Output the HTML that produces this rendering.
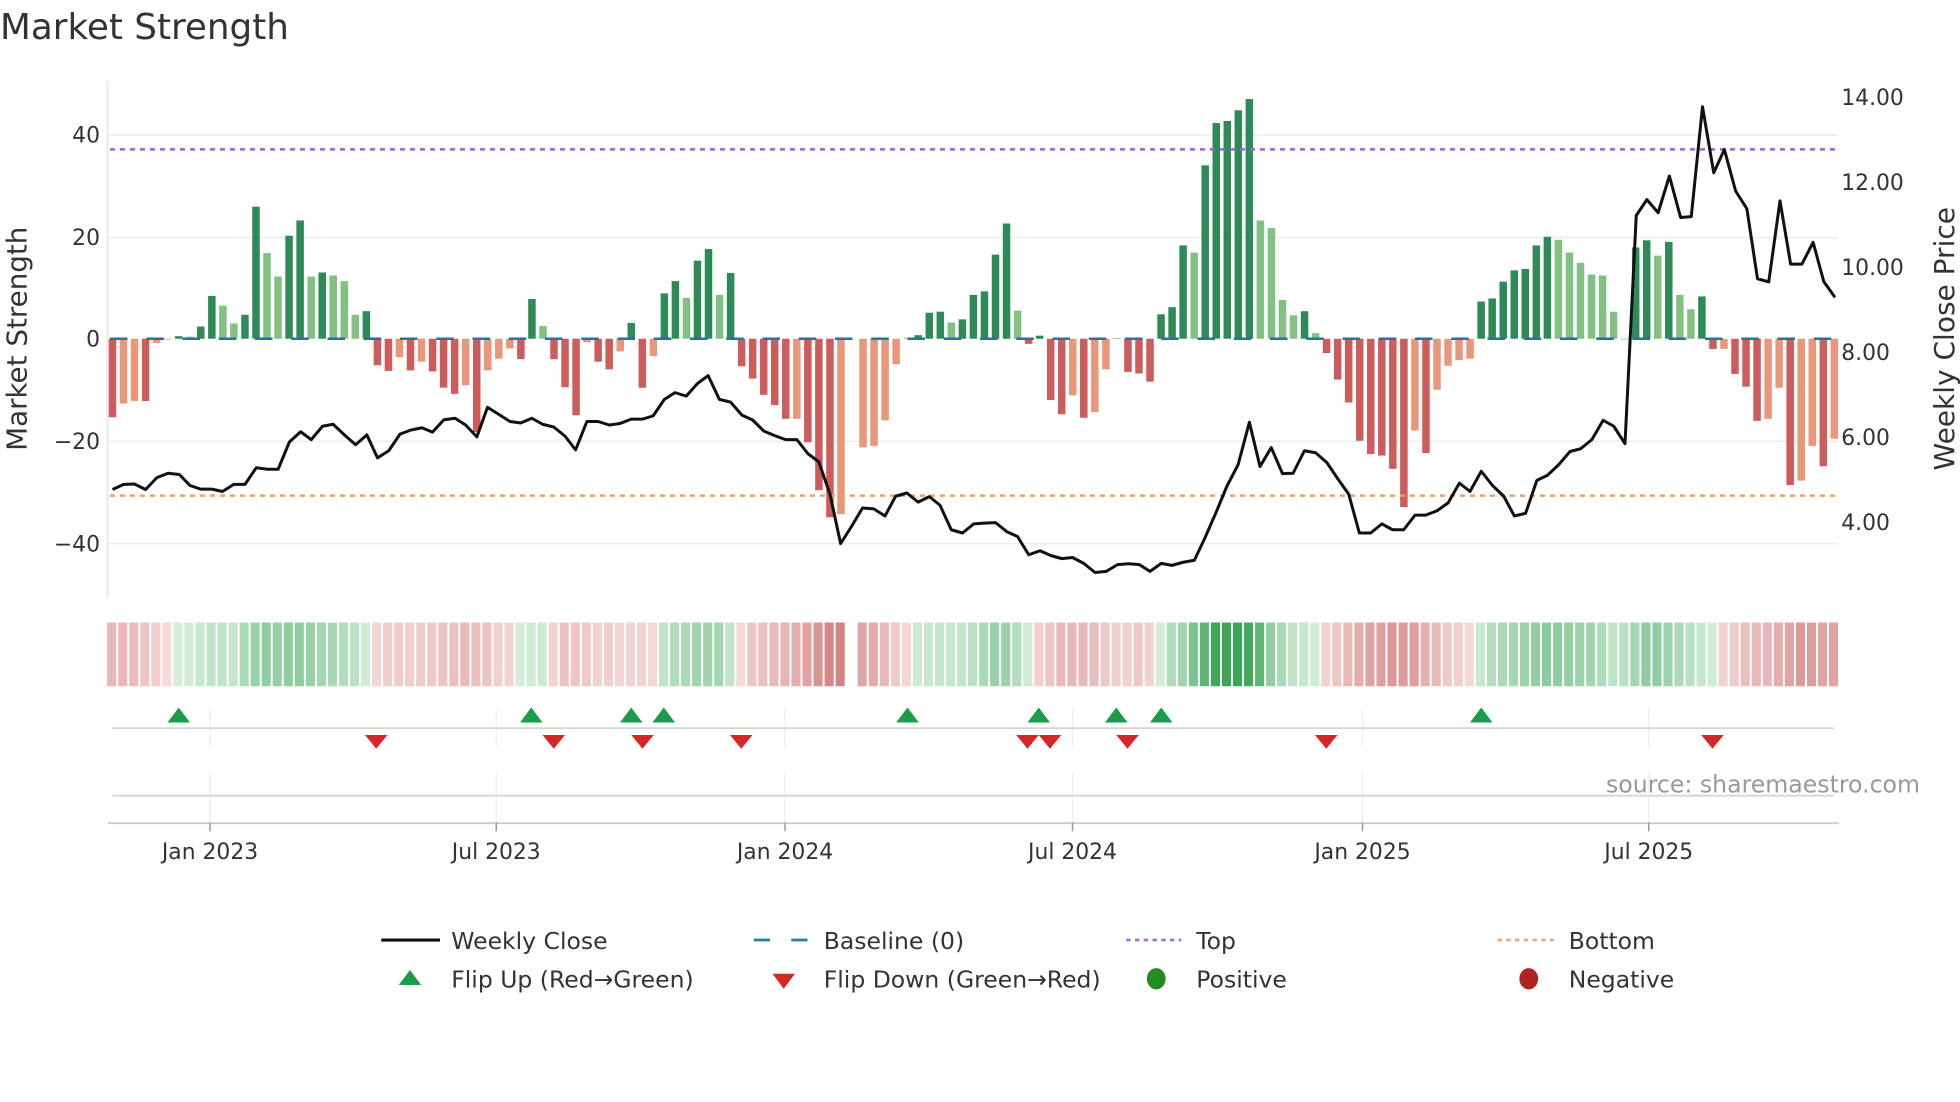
<!DOCTYPE html>
<html><head><meta charset="utf-8">
<style>
html,body{margin:0;padding:0;background:#fff;}
svg{display:block;font-family:"DejaVu Sans","Liberation Sans",sans-serif;}
</style></head>
<body>
<svg id="c" width="1960" height="1102" viewBox="0 0 1568 881.6" xmlns="http://www.w3.org/2000/svg">
<rect width="1568" height="882" fill="#fff"/>
<text x="0" y="31" font-size="28.6" fill="#333">Market Strength</text>
<!-- grid -->
<g stroke="#ececec" stroke-width="1.2">
<line x1="86" y1="108" x2="1470" y2="108"/>
<line x1="86" y1="190" x2="1470" y2="190"/>
<line x1="86" y1="353" x2="1470" y2="353"/>
<line x1="86" y1="435" x2="1470" y2="435"/>
</g>
<line x1="86" y1="65" x2="86" y2="478" stroke="#e8e8e8" stroke-width="1.5"/>
<g font-size="17.5" fill="#333" text-anchor="end">
<text x="80" y="114">40</text>
<text x="80" y="196">20</text>
<text x="80" y="277">0</text>
<text x="80" y="359">−20</text>
<text x="80" y="441">−40</text>
</g>
<g font-size="17.5" fill="#333">
<text x="1473" y="84">14.00</text>
<text x="1473" y="152">12.00</text>
<text x="1473" y="220">10.00</text>
<text x="1473" y="288">8.00</text>
<text x="1473" y="356">6.00</text>
<text x="1473" y="424">4.00</text>
</g>
<text transform="translate(21,271) rotate(-90)" font-size="22.2" fill="#333" text-anchor="middle">Market Strength</text>
<text transform="translate(1563,271) rotate(-90)" font-size="22.4" fill="#333" text-anchor="middle">Weekly Close Price</text>
<g id="bars"></g>
<line x1="88" y1="271" x2="1470" y2="271" stroke="#2b6f9e" stroke-width="2" stroke-dasharray="14 15"/>
<line x1="88" y1="119.5" x2="1470" y2="119.5" stroke="#9b5fd6" stroke-width="2" stroke-dasharray="4 4"/>
<line x1="88" y1="396.5" x2="1470" y2="396.5" stroke="#f0a060" stroke-width="2" stroke-dasharray="4 4"/>
<polyline id="price" fill="none" stroke="#111" stroke-width="2.4" stroke-linejoin="round"/>
<g id="heat"></g>
<!-- marker panel -->
<g stroke="#eceef0" stroke-width="1">
<line x1="168" y1="567" x2="168" y2="598"/><line x1="397" y1="567" x2="397" y2="598"/><line x1="628" y1="567" x2="628" y2="598"/><line x1="858" y1="567" x2="858" y2="598"/><line x1="1090" y1="567" x2="1090" y2="598"/><line x1="1319" y1="567" x2="1319" y2="598"/>
<line x1="168" y1="617" x2="168" y2="658"/><line x1="397" y1="617" x2="397" y2="658"/><line x1="628" y1="617" x2="628" y2="658"/><line x1="858" y1="617" x2="858" y2="658"/><line x1="1090" y1="617" x2="1090" y2="658"/><line x1="1319" y1="617" x2="1319" y2="658"/>
</g>
<line x1="90" y1="582.5" x2="1467" y2="582.5" stroke="#d4d6d8" stroke-width="1.5"/>
<line x1="90" y1="636.5" x2="1467" y2="636.5" stroke="#d4d6d8" stroke-width="1.5"/>
<line x1="86" y1="658.5" x2="1471" y2="658.5" stroke="#ccc" stroke-width="1.5"/>
<g stroke="#999" stroke-width="1.2">
<line x1="168" y1="658" x2="168" y2="665"/><line x1="397" y1="658" x2="397" y2="665"/><line x1="628" y1="658" x2="628" y2="665"/><line x1="858" y1="658" x2="858" y2="665"/><line x1="1090" y1="658" x2="1090" y2="665"/><line x1="1319" y1="658" x2="1319" y2="665"/>
</g>
<g id="marks"></g>
<g font-size="17.5" fill="#333" text-anchor="middle">
<text x="168" y="687">Jan 2023</text>
<text x="397" y="687">Jul 2023</text>
<text x="628" y="687">Jan 2024</text>
<text x="858" y="687">Jul 2024</text>
<text x="1090" y="687">Jan 2025</text>
<text x="1319" y="687">Jul 2025</text>
</g>
<text x="1536" y="634" font-size="18.9" fill="#999" text-anchor="end">source: sharemaestro.com</text>
<!-- legend -->
<g font-size="18.8" fill="#333">
<line x1="305" y1="752" x2="352" y2="752" stroke="#111" stroke-width="2.5"/>
<text x="361" y="759">Weekly Close</text>
<line x1="603" y1="752" x2="647" y2="752" stroke="#2b7ab0" stroke-width="2.2" stroke-dasharray="13 17"/>
<text x="659" y="759">Baseline (0)</text>
<line x1="901" y1="752" x2="945" y2="752" stroke="#a070e0" stroke-width="2.2" stroke-dasharray="3.5 3.5"/>
<text x="957" y="759">Top</text>
<line x1="1198" y1="752" x2="1243" y2="752" stroke="#f0a870" stroke-width="2.2" stroke-dasharray="3.5 3.5"/>
<text x="1255" y="759">Bottom</text>
<polygon points="328,776 337,788 319,788" fill="#1a9c4a"/>
<text x="361" y="790">Flip Up (Red→Green)</text>
<polygon points="618,779 636,779 627,791" fill="#d62728"/>
<text x="659" y="790">Flip Down (Green→Red)</text>
<ellipse cx="925" cy="783" rx="7.5" ry="8.5" fill="#228b22"/>
<text x="957" y="790">Positive</text>
<ellipse cx="1223" cy="783" rx="7.5" ry="8.5" fill="#b22222"/>
<text x="1255" y="790">Negative</text>
</g>
</svg>
<script>
var NS="http://www.w3.org/2000/svg";
function el(t,a,p){var e=document.createElementNS(NS,t);for(var k in a)e.setAttribute(k,a[k]);p.appendChild(e);return e;}
var V=[[-15.4,1],[-12.7,0],[-12.2,0],[-12.2,1],[-0.8,0],[-0.1,0],[0.5,1],[0.4,0],[2.4,1],[8.4,1],[6.5,0],[3,0],[4.7,1],[25.9,1],[16.8,0],[12.2,0],[20.2,1],[23.2,1],[12.2,0],[13,1],[12.4,0],[11.3,0],[4.7,0],[5.4,1],[-5.2,1],[-6.3,1],[-3.6,0],[-6.2,1],[-4.5,0],[-6.4,1],[-9.6,1],[-10.8,1],[-9.1,0],[-18.3,1],[-6.2,0],[-3.9,0],[-1.9,0],[-4,1],[7.8,1],[2.5,0],[-4,1],[-9.5,1],[-15,1],[-0.7,0],[-4.5,1],[-6,1],[-2.5,0],[3.1,1],[-9.6,1],[-3.4,0],[8.9,1],[11.3,1],[8,0],[15.3,1],[17.6,1],[8.6,0],[12.9,1],[-5.4,1],[-7.8,1],[-11,1],[-13,1],[-15.7,1],[-15.7,0],[-20.3,1],[-29.7,1],[-35,1],[-34.4,0],null,[-21.3,0],[-21,0],[-16,0],[-5,0],[0.2,0],[0.7,1],[5.1,1],[5.3,1],[3.2,0],[3.8,1],[8.6,1],[9.3,1],[16.5,1],[22.6,1],[5.5,0],[-1,1],[0.6,1],[-12,1],[-14.8,1],[-11.1,0],[-15.5,1],[-14.4,0],[-6,0],[0.1,0],[-6.5,1],[-6.8,1],[-8.4,1],[4.8,1],[6.2,1],[18.3,1],[16.9,0],[34,1],[42.3,1],[42.7,1],[44.8,1],[47,1],[23.2,0],[21.7,0],[7.6,0],[4.6,0],[5.4,1],[1.1,0],[-2.8,1],[-8,1],[-12.5,1],[-20,1],[-22.6,1],[-22.9,1],[-25.5,1],[-33,1],[-18,0],[-22.4,1],[-10,0],[-5.3,0],[-4.2,0],[-3.9,0],[7.3,1],[7.9,1],[11.2,1],[13.4,1],[13.7,1],[18.3,1],[20,1],[19.4,0],[16.9,0],[14.9,0],[12.6,0],[12.4,0],[5.3,0],[0,0],[17.9,1],[19.3,1],[16.3,0],[19,1],[8.6,0],[5.8,0],[8.3,1],[-2,1],[-2,0],[-6.9,1],[-9.4,1],[-16.1,1],[-15.7,0],[-9.6,0],[-28.7,1],[-27.8,0],[-21,0],[-25,1],[-19.6,0]];
var bars=document.getElementById('bars'),heat=document.getElementById('heat');
function mix(a,b,t){return 'rgb('+[0,1,2].map(function(i){return Math.round(a[i]+(b[i]-a[i])*t)}).join(',')+')';}
for(var i=0;i<V.length;i++){
 var x=90+i*8.83,d=V[i];
 if(!d)continue;
 var v=d[0],h=Math.abs(v)*4.08,c;
 if(v>=0)c=d[1]?'#2e8b57':'#82c182';else c=d[1]?'#cd5c5c':'#e9977a';
 el('rect',{x:x-3,y:v>=0?271-h:271,width:6,height:Math.max(h,0.6),fill:c},bars);
 var s=0,n=0;for(var j=i-1;j<=i+1;j++){if(V[j]){s+=V[j][0];n++;}}
 var m=s/n,t=Math.min(1,Math.abs(m)/40);
 var col=m>=0?mix([214,238,220],[60,165,88],t):mix([245,218,218],[205,120,118],t);
 el('rect',{x:x-4.3,y:498,width:7.3,height:51,fill:col},heat);
}
var P=[[180,1238],[198,1225],[215,1224],[233,1238],[251,1208],[269,1197],[287,1200],[304,1228],[321,1237],[339,1237],[356,1243],[374,1225],[392,1225],[410,1183],[428,1187],[445,1187],[463,1118],[481,1092],[498,1112],[516,1078],[533,1073],[551,1100],[569,1125],[587,1100],[604,1158],[622,1140],[640,1098],[657,1088],[675,1082],[692,1093],[710,1062],[728,1058],[745,1075],[763,1105],[780,1030],[798,1048],[816,1066],[833,1070],[851,1058],[868,1073],[886,1080],[904,1103],[921,1138],[939,1066],[957,1066],[975,1075],[992,1071],[1010,1060],[1028,1060],[1045,1052],[1063,1010],[1080,993],[1098,1002],[1116,970],[1133,950],[1151,1010],[1169,1017],[1187,1050],[1204,1062],[1222,1090],[1240,1102],[1257,1112],[1275,1112],[1293,1148],[1310,1168],[1328,1250],[1345,1375],[1363,1330],[1380,1285],[1398,1287],[1416,1305],[1433,1255],[1451,1247],[1469,1270],[1487,1256],[1504,1278],[1522,1340],[1540,1348],[1558,1325]];
var P2=[[7,1323],[25,1322],[43,1345],[60,1357],[78,1403],[96,1393],[113,1405],[131,1413],[148,1410],[166,1425],[184,1448],[202,1445],[220,1428],[238,1426],[255,1428],[272,1445],[290,1425],[307,1430],[325,1422],[343,1417],[360,1360],[378,1295],[395,1230],[413,1175],[431,1068],[448,1180],[466,1132],[484,1198],[501,1197],[519,1140],[537,1145],[555,1170],[572,1210],[590,1250],[607,1348],[625,1348],[643,1325],[660,1340],[678,1340],[696,1303],[713,1303],[731,1292],[749,1272],[767,1222],[784,1243],[802,1192],[820,1228],[838,1255],[855,1305],[873,1298],[891,1215],[908,1202],[926,1175],[944,1142],[961,1135],[979,1112],[997,1063],[1014,1078],[1032,1122],[1050,545],[1067,505],[1085,538],[1103,445],[1121,550],[1138,548],[1156,270],[1174,437],[1191,378],[1209,483],[1227,528],[1244,705],[1262,713],[1280,508],[1297,668],[1315,668],[1333,613],[1350,712],[1368,752]];
var pts=P.map(function(p){return (p[0]/2).toFixed(1)+','+(p[1]*0.3163).toFixed(1)}).concat(P2.map(function(p){return (p[0]/2+784).toFixed(1)+','+(p[1]*0.3163).toFixed(1)}));
document.getElementById('price').setAttribute('points',pts.join(' '));
var mk=document.getElementById('marks');
[143,425,505,531,726,831,893,929,1185].forEach(function(x){el('polygon',{points:(x)+',566 '+(x+9)+',578 '+(x-9)+',578',fill:'#1a9c4a'},mk);});
[301,443,514,593,822,840,902,1061,1370].forEach(function(x){el('polygon',{points:(x-9)+',588 '+(x+9)+',588 '+x+',599',fill:'#d62728'},mk);});
</script>
</body></html>
